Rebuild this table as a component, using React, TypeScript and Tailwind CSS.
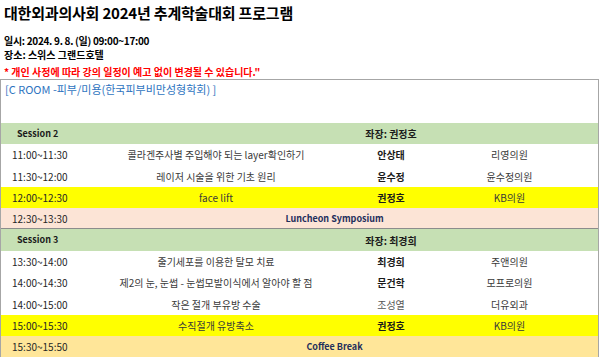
import React from 'react';

type Row =
  | { kind: 'talk'; time: string; topic: string; name: string; org: string; bg?: string; nameBold?: boolean }
  | { kind: 'session'; label: string; chair: string }
  | { kind: 'break'; time: string; label: string; bg: string; divider?: boolean };

const rows: Row[] = [
  { kind: 'session', label: 'Session 2', chair: '좌장: 권정호' },
  { kind: 'talk', time: '11:00~11:30', topic: '콜라겐주사별 주입해야 되는 layer확인하기', name: '안상태', org: '리영의원' },
  { kind: 'talk', time: '11:30~12:00', topic: '레이저 시술을 위한 기초 원리', name: '윤수정', org: '윤수정의원' },
  { kind: 'talk', time: '12:00~12:30', topic: 'face lift', name: '권정호', org: 'KB의원', bg: 'bg-[#ffff00]' },
  { kind: 'break', time: '12:30~13:30', label: 'Luncheon Symposium', bg: 'bg-[#fce4d6]', divider: true },
  { kind: 'session', label: 'Session 3', chair: '좌장: 최경희' },
  { kind: 'talk', time: '13:30~14:00', topic: '줄기세포를 이용한 탈모 치료', name: '최경희', org: '주앤의원' },
  { kind: 'talk', time: '14:00~14:30', topic: '제2의 눈, 눈썹 - 눈썹모발이식에서 알아야 할 점', name: '문건학', org: '모프로의원' },
  { kind: 'talk', time: '14:00~15:00', topic: '작은 절개 부유방 수술', name: '조성열', org: '더유외과', nameBold: false },
  { kind: 'talk', time: '15:00~15:30', topic: '수직절개 유방축소', name: '권정호', org: 'KB의원', bg: 'bg-[#ffff00]' },
  { kind: 'break', time: '15:30~15:50', label: 'Coffee Break', bg: 'bg-[#ffe699]' },
];

const grid = 'grid grid-cols-[70px_290px_60px_1fr] items-center h-[21.3px]';

function TableRow({ row }: { row: Row }) {
  if (row.kind === 'session') {
    return (
      <div className={`${grid} bg-[#c6e0b4] font-bold text-[#1a1a1a]`}>
        <div className="pl-4 text-[9px] whitespace-nowrap">{row.label}</div>
        <div />
        <div className="flex justify-center whitespace-nowrap">{row.chair}</div>
        <div />
      </div>
    );
  }
  if (row.kind === 'break') {
    return (
      <div className={`${grid} ${row.bg} ${row.divider ? 'border-b border-[#8c8c8c]' : ''}`}>
        <div className="pl-[11px] text-[#262626] whitespace-nowrap">{row.time}</div>
        <div className="col-span-3 text-center text-[9px] font-bold text-[#1f2f5c] whitespace-nowrap">{row.label}</div>
      </div>
    );
  }
  return (
    <div className={`${grid} ${row.bg ?? 'bg-white'}`}>
      <div className="pl-[11px] text-[#262626] whitespace-nowrap">{row.time}</div>
      <div className="text-center text-[#3a3a3a] whitespace-nowrap">{row.topic}</div>
      <div className={`flex justify-center whitespace-nowrap ${row.nameBold === false ? 'text-[#555]' : 'font-bold text-[#1a1a1a]'}`}>
        {row.name}
      </div>
      <div className="text-center text-[#3a3a3a] whitespace-nowrap">{row.org}</div>
    </div>
  );
}

export default function App() {
  return (
    <div
      className="w-[600px] h-[359px] overflow-hidden bg-white text-black"
      style={{ fontFamily: '"Noto Sans CJK KR", "Noto Sans", sans-serif' }}
    >
      <div className="pl-1 pt-[3px]">
        <h1 className="text-[15px] font-bold leading-[20px] tracking-[-0.2px]">대한외과의사회 2024년 추계학술대회 프로그램</h1>
        <div className="mt-[11px] text-[10px] font-bold leading-[14px]">
          <p className="tracking-[-0.3px]">일시: 2024. 9. 8. (일) 09:00~17:00</p>
          <p>장소: 스위스 그랜드호텔</p>
          <p className="text-[#ff0000] pt-[3px] leading-[13px]">* 개인 사정에 따라 강의 일정이 예고 없이 변경될 수 있습니다."</p>
        </div>
      </div>

      <div className="mt-[1px] w-[599px] border-t border-l border-r border-[#a6a6a6] text-[10px]">
        <div className="h-[43px] pl-1 pt-[1px] text-[11px] text-[#2e74c0] leading-[16px]">
          [C ROOM -피부/미용(한국피부비만성형학회) ]
        </div>
        {rows.map((row, i) => (
          <TableRow key={i} row={row} />
        ))}
      </div>
    </div>
  );
}
